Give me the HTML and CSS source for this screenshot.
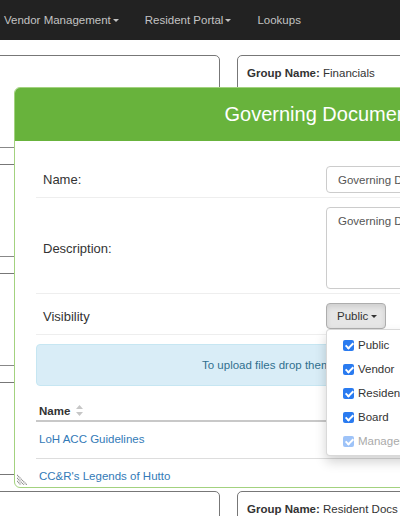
FILE: index.html
```html
<!DOCTYPE html>
<html>
<head>
<meta charset="utf-8" />
<title>Document Groups</title>
<link rel="stylesheet" href="styles.css">
</head>
<body>
	<div class="topbar">
		<a href="javascript:;" class="nav-item">Vendor Management<b class="caret"></b></a>
		<a href="javascript:;" class="nav-item">Resident Portal<b class="caret"></b></a>
		<a href="javascript:;" class="nav-item">Lookups</a>
	</div>

	<div class="page">
		<div class="col col-left">
			<div class="panel panel-tall">
				<div class="block"></div>
				<div class="sep"></div>
				<div class="block"></div>
				<div class="sep"></div>
				<div class="block"></div>
				<div class="sep"></div>
				<div class="block"></div>
			</div>
			<div class="panel"></div>
		</div>
		<div class="col col-right">
			<div class="panel panel-tall">
				<div class="panel-head"><b>Group Name:</b> Financials</div>
			</div>
			<div class="panel">
				<div class="panel-head"><b>Group Name:</b> Resident Docs</div>
			</div>
		</div>
	</div>

	<!-- edit dialog -->
	<div class="modal">
		<div class="modal-head">Governing Documents</div>
		<div class="modal-body">
			<div class="row">
				<label class="row-label">Name:</label>
				<div class="row-ctrl"><input type="text" class="field" value="Governing Documents" /></div>
			</div>
			<div class="row">
				<label class="row-label">Description:</label>
				<div class="row-ctrl"><textarea class="field area">Governing Documents</textarea></div>
			</div>
			<div class="row row-vis">
				<label class="row-label">Visibility</label>
				<div class="row-ctrl">
					<button class="btn">Public<b class="caret"></b></button>
					<ul class="menu">
						<li><input type="checkbox" checked /> Public</li>
						<li><input type="checkbox" checked /> Vendor</li>
						<li><input type="checkbox" checked /> Resident</li>
						<li><input type="checkbox" checked /> Board</li>
						<li class="off"><input type="checkbox" checked disabled /> Management</li>
					</ul>
				</div>
			</div>

			<div class="drop">To upload files drop them here.</div>

			<table class="files">
				<tr>
					<th>Name <svg class="sort" width="7" height="11" viewBox="0 0 7 11"><path d="M3.5 0 L7 4 L0 4 Z M0 7 L7 7 L3.5 11 Z" fill="#c6c6c6"/></svg></th>
				</tr>
				<tr><td><a href="javascript:;">LoH ACC Guidelines</a></td></tr>
				<tr><td><a href="javascript:;">CC&amp;R's Legends of Hutto</a></td></tr>
			</table>
		</div>
		<svg class="grip" width="11" height="11" viewBox="0 0 11 11">
			<path d="M0 1 L10 11 M0 4 L7 11 M0 7 L4 11" stroke="#8a8a8a" stroke-width="1.2" stroke-dasharray="1.2 0.6"/>
		</svg>
	</div>
</body>
</html>
```
FILE: styles.css
```css
*{ padding:0; margin:0; box-sizing:border-box; }
body{ font-family:"Liberation Sans", Arial, sans-serif; color:#333; background:#fff; overflow:hidden; width:400px; height:516px; position:relative; }

.topbar{ height:40px; background:#222; display:flex; align-items:center; padding-left:4px; }
.nav-item{ font-size:11.5px; color:#c2c2c2; text-decoration:none; margin-right:26px; white-space:nowrap; display:flex; align-items:center; }
.caret{ display:inline-block; width:0; height:0; margin-left:2px; border-top:3px solid; border-left:3px solid transparent; border-right:3px solid transparent; }

.page{ display:flex; gap:17px; padding-top:15px; margin-left:-10px; }
.col{ display:flex; flex-direction:column; gap:16px; flex-shrink:0; }
.col-left{ width:230px; }
.col-right{ width:300px; }
.panel{ border:1px solid #777; border-radius:5px; height:60px; }
.panel-tall{ height:420px; }
.panel-head{ font-size:11.5px; line-height:15px; padding:10px 9px; white-space:nowrap; }
.block{ height:91px; }
.sep{ height:18px; border-top:1px solid #888; border-bottom:1px solid #777; }

.modal{ position:absolute; left:14px; top:87px; width:620px; height:401px; background:#fff; border:1px solid #a3d27f; border-radius:6px; overflow:hidden; }
.modal-head{ height:53px; background:#68b33c; color:#fff; font-size:20px; line-height:53px; text-align:center; white-space:nowrap; }
.modal-body{ padding:16px 21px 0; }

.row{ display:flex; align-items:center; padding:9px 0 4px; border-bottom:1px solid #eee; }
.row-vis{ padding-bottom:5px; }
.row-label{ width:290px; flex-shrink:0; padding-left:7px; font-size:13px; color:#333; }
.row-ctrl{ flex:1; position:relative; }
.field{ display:block; width:100%; height:27px; border:1px solid #ccc; border-radius:4px; padding:0 11px; font:11.5px "Liberation Sans", Arial, sans-serif; color:#555; }
.area{ height:82px; padding:6px 11px; resize:none; line-height:14px; }

.btn{ height:26px; padding:0 8px 0 10px; background:#e6e6e6; border:1px solid #adadad; border-radius:4px; font:11.5px "Liberation Sans", Arial, sans-serif; color:#333; display:flex; align-items:center; box-shadow:inset 0 3px 5px rgba(0,0,0,0.1); }
.btn .caret{ margin-left:3px; }

.menu{ position:absolute; left:0; top:26px; width:130px; padding:3px 0 2px; background:#fff; border:1px solid rgba(0,0,0,0.15); border-radius:4px; box-shadow:0 6px 12px rgba(0,0,0,0.175); list-style:none; z-index:5; }
.menu li{ height:24px; display:flex; align-items:center; padding-left:16px; font-size:11.5px; color:#333; white-space:nowrap; }
.menu li.off{ color:#aaa; }
.menu input{ appearance:none; -webkit-appearance:none; width:11px; height:11px; border-radius:2px; background:#2a7bf0; margin:0 4px 0 0; position:relative; flex-shrink:0; }
.menu input::after{ content:""; position:absolute; left:3.5px; top:1px; width:3px; height:6px; border:solid #fff; border-width:0 2px 2px 0; transform:rotate(45deg); }
.menu input:disabled{ opacity:0.45; }

.drop{ margin-top:9px; height:42px; line-height:40px; background:#d9edf7; border:1px solid #c6e6f2; border-radius:4px; color:#31708f; font-size:11.5px; padding-left:165px; white-space:nowrap; }

.files{ width:100%; margin-top:15px; border-collapse:collapse; font-size:11.5px; }
.files th{ text-align:left; padding:2px 3px 1px; line-height:16px; border-bottom:2px solid #c8c8c8; }
.files td{ padding:9px 3px 9px; line-height:16px; border-bottom:1px solid #ddd; }
.files tr:nth-child(2) td{ padding-bottom:11px; }
.files a{ color:#337ab7; text-decoration:none; }
.sort{ vertical-align:-1px; margin-left:2px; }

.grip{ position:absolute; left:2px; bottom:2px; }
```
